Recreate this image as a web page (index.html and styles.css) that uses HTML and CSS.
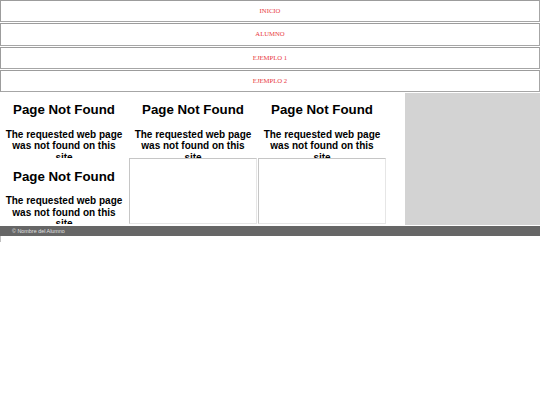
FILE: index.html
```html
<!DOCTYPE html>
<html lang="es">
<head>
<meta charset="utf-8">
<title>Alumno</title>
<link rel="stylesheet" href="styles.css">
</head>
<body>
<nav class="menu">
  <a class="menu-btn">INICIO</a>
  <a class="menu-btn">ALUMNO</a>
  <a class="menu-btn">EJEMPLO 1</a>
  <a class="menu-btn">EJEMPLO 2</a>
</nav>
<main class="content">
  <section class="frames">
    <div class="frame">
      <h1 class="nf-title">Page Not Found</h1>
      <p class="nf-text">The requested web page was not found on this site</p>
    </div>
    <div class="frame">
      <h1 class="nf-title">Page Not Found</h1>
      <p class="nf-text">The requested web page was not found on this site</p>
    </div>
    <div class="frame">
      <h1 class="nf-title">Page Not Found</h1>
      <p class="nf-text">The requested web page was not found on this site</p>
    </div>
    <div class="frame frame-low">
      <h1 class="nf-title">Page Not Found</h1>
      <p class="nf-text">The requested web page was not found on this site</p>
    </div>
    <div class="frame frame-empty"></div>
    <div class="frame frame-empty"></div>
  </section>
  <aside class="sidebar"></aside>
</main>
<footer class="footer">© Nombre del Alumno</footer>
<div class="tail"></div>
</body>
</html>
```

FILE: styles.css
```css
body {
  margin: 0;
  font-family: "Liberation Serif", "Times New Roman", serif;
  background: #fff;
}

.menu {
  display: flex;
  flex-direction: column;
  gap: 1px;
}

.menu-btn {
  display: flex;
  align-items: center;
  justify-content: center;
  height: 22.3px;
  padding-bottom: 1px;
  box-sizing: border-box;
  border: 1px solid #9c9c9c;
  border-bottom-color: #a6a6a6;
  border-right-color: #a6a6a6;
  background: #fff;
  color: #e8383c;
  font-size: 6.7px;
  text-decoration: none;
}

.content {
  display: flex;
  height: 132px;
  margin-top: 0.8px;
}

.frames {
  width: 405px;
  display: grid;
  grid-template-columns: repeat(3, 128px);
  grid-template-rows: 65px 66px;
  column-gap: 1px;
  align-content: start;
}

.frame {
  overflow: hidden;
  text-align: center;
  font-family: "Liberation Sans", Arial, sans-serif;
  color: #000;
  padding: 0 3px;
  box-sizing: border-box;
}

.frame-low {
  padding-top: 1.5px;
}

.nf-title {
  font-size: 13.3px;
  font-weight: bold;
  line-height: 15.3px;
  margin: 9.3px 0 0;
}

.nf-text {
  font-size: 10px;
  font-weight: bold;
  line-height: 11.5px;
  margin: 11px 0 0;
}

.frame-empty {
  border-top: 1.5px solid #c6c6c6;
  border-left: 1.5px solid #c6c6c6;
  border-right: 1px solid #e6e6e6;
  border-bottom: 1px solid #e6e6e6;
}

.sidebar {
  flex: 1;
  background: #d3d3d3;
}

.footer {
  display: flex;
  align-items: center;
  height: 10px;
  margin-top: 1.2px;
  padding-left: 12px;
  background: #666;
  color: #e0e0e0;
  font-family: "Liberation Sans", Arial, sans-serif;
  font-size: 5.4px;
}

.tail {
  width: 0;
  height: 6px;
  border-left: 1px solid #c0c0c0;
}
```
